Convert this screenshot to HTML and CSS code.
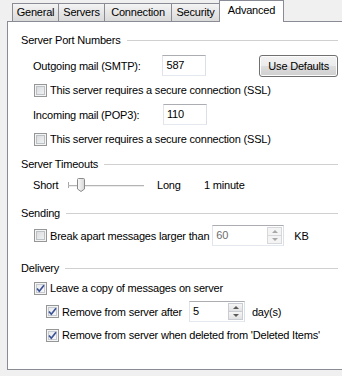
FILE: index.html
```html
<!DOCTYPE html>
<html lang="en">
<head>
  <meta charset="UTF-8">
  <title>Account Properties - Advanced</title>
  <link rel="stylesheet" href="styles.css">
</head>
<body>
  <div class="dialog">
    <div class="tabs">
      <div class="tab tab-general">General</div>
      <div class="tab tab-servers">Servers</div>
      <div class="tab tab-connection">Connection</div>
      <div class="tab tab-security">Security</div>
      <div class="tab tab-advanced active">Advanced</div>
    </div>

    <div class="panel">
      <!-- Ports -->
      <div class="group ports">
        <div class="group-head">Server Port Numbers</div>
        <div class="row tall">
          <span class="field-label">Outgoing mail (SMTP):</span>
          <div class="textbox port">587</div>
          <button class="btn">Use Defaults</button>
        </div>
        <div class="row check-row">
          <span class="check"></span>
          <span class="check-label">This server requires a secure connection (SSL)</span>
        </div>
        <div class="row tall">
          <span class="field-label">Incoming mail (POP3):</span>
          <div class="textbox port">110</div>
        </div>
        <div class="row check-row">
          <span class="check"></span>
          <span class="check-label">This server requires a secure connection (SSL)</span>
        </div>
      </div>

      <!-- Timeouts -->
      <div class="group timeouts">
        <div class="group-head">Server Timeouts</div>
        <div class="row">
          <span class="slider-short">Short</span>
          <svg class="slider" width="80" height="16" viewBox="0 0 80 16">
            <defs>
              <linearGradient id="thumb" x1="0" y1="0" x2="1" y2="0">
                <stop offset="0" stop-color="#fbfbfb"/>
                <stop offset="1" stop-color="#d6d6d6"/>
              </linearGradient>
            </defs>
            <line x1="0.5" y1="5" x2="0.5" y2="11" stroke="#a8a8a8"/>
            <line x1="0" y1="8.5" x2="76" y2="8.5" stroke="#b4b4b4"/>
            <line x1="1" y1="9.5" x2="76" y2="9.5" stroke="#ececec"/>
            <path d="M9.5 2.5 Q9.5 1.5 10.5 1.5 H15.5 Q16.5 1.5 16.5 2.5 V12 L13 14.5 L9.5 12 Z" fill="url(#thumb)" stroke="#8a8a8a"/>
          </svg>
          <span class="slider-long">Long</span>
          <span>1 minute</span>
        </div>
      </div>

      <!-- Sending -->
      <div class="group sending">
        <div class="group-head">Sending</div>
        <div class="row tall check-row">
          <span class="check"></span>
          <span class="check-label">Break apart messages larger than</span>
          <div class="spin spin-kb disabled">
            <span class="spin-value">60</span>
            <span class="spin-btns"><span class="up"></span><span class="down"></span></span>
          </div>
          <span class="unit-kb">KB</span>
        </div>
      </div>

      <!-- Delivery -->
      <div class="group delivery">
        <div class="group-head">Delivery</div>
        <div class="row check-row">
          <span class="check checked"><svg width="11" height="11" viewBox="0 0 11 11"><path d="M2 5.5 L4.3 8.2 L9 2.3" fill="none" stroke="#3c5295" stroke-width="1.7"/></svg></span>
          <span class="check-label">Leave a copy of messages on server</span>
        </div>
        <div class="row tall check-row nested">
          <span class="check checked"><svg width="11" height="11" viewBox="0 0 11 11"><path d="M2 5.5 L4.3 8.2 L9 2.3" fill="none" stroke="#3c5295" stroke-width="1.7"/></svg></span>
          <span class="check-label">Remove from server after</span>
          <div class="spin spin-days">
            <span class="spin-value">5</span>
            <span class="spin-btns"><span class="up"></span><span class="down"></span></span>
          </div>
          <span class="unit-days">day(s)</span>
        </div>
        <div class="row check-row nested">
          <span class="check checked"><svg width="11" height="11" viewBox="0 0 11 11"><path d="M2 5.5 L4.3 8.2 L9 2.3" fill="none" stroke="#3c5295" stroke-width="1.7"/></svg></span>
          <span class="check-label">Remove from server when deleted from 'Deleted Items'</span>
        </div>
      </div>
    </div>
  </div>
</body>
</html>
```

FILE: styles.css
```css
body {
  margin: 0;
  padding: 0;
  width: 342px;
  height: 376px;
  overflow: hidden;
  background-color: #f0f0f0;
  font-family: "Liberation Sans", Arial, sans-serif;
  font-size: 11px;
  letter-spacing: -0.2px;
  color: #000;
}

/* Tabs */
.tabs {
  display: flex;
  align-items: flex-end;
  height: 21px;
  margin-left: 12px;
}
.tab {
  box-sizing: border-box;
  height: 18px;
  margin-right: -1px;
  border: 1px solid #898c95;
  border-bottom: none;
  background: linear-gradient(#f4f4f4, #e6e6e6 50%, #dadada);
  text-align: center;
  line-height: 17px;
}
.tab-general { width: 47px; }
.tab-servers { width: 47px; }
.tab-connection { width: 68px; }
.tab-security { width: 49px; }
.tab-advanced { width: 65px; }
.tab.active {
  position: relative;
  z-index: 1;
  height: 22px;
  margin-bottom: -1px;
  background: #fff;
  line-height: 19px;
}

/* Panel */
.panel {
  box-sizing: border-box;
  width: 339px;
  height: 349px;
  margin-left: 7px;
  padding: 10px 7px 0 13px;
  border: 1px solid #898c95;
  background-color: #fff;
}

.group {
  display: flex;
  flex-direction: column;
}
.ports { gap: 6px; }
.timeouts { gap: 5px; margin-top: 9px; }
.sending { gap: 4px; margin-top: 12px; }
.delivery { gap: 5px; margin-top: 14px; }

.group-head {
  display: flex;
  align-items: center;
  height: 16px;
}
.group-head::after {
  content: "";
  flex: 1;
  height: 1px;
  margin-left: 6px;
  background-color: #d0d0d0;
}
.ports .group-head { margin-bottom: 1px; }
.delivery .group-head { margin-bottom: -1px; }

.row {
  display: flex;
  align-items: center;
  height: 16px;
  padding-left: 12px;
  white-space: nowrap;
}
.row.tall {
  height: 21px;
}
.row.check-row {
  padding-left: 13px;
}
.row.nested {
  padding-left: 25px;
}

.field-label {
  width: 130px;
}

/* Text box */
.textbox {
  box-sizing: border-box;
  height: 21px;
  padding-left: 3px;
  border: 1px solid;
  border-color: #abadb3 #dbdfe6 #e3e9ef #e2e3ea;
  background: #fff;
  line-height: 19px;
}
.port { width: 44px; }

.btn {
  box-sizing: border-box;
  width: 79px;
  height: 22px;
  margin-left: 53px;
  padding: 0;
  border: 1px solid #707070;
  border-radius: 3px;
  background: linear-gradient(#f2f2f2, #ebebeb 50%, #dddddd 51%, #cfcfcf);
  box-shadow: inset 0 0 0 1px #fcfcfc;
  font-family: inherit;
  font-size: 11px;
  letter-spacing: -0.2px;
  color: #000;
}

/* Checkbox */
.check {
  box-sizing: border-box;
  flex: none;
  width: 13px;
  height: 13px;
  border: 1px solid #959696;
  background: linear-gradient(135deg, #d3d6da, #f7f7f7);
  box-shadow: inset 0 0 0 1px #f4f4f4, inset 0 0 0 2px #bcc1c6;
}
.check.checked {
  background: linear-gradient(135deg, #e4e6e9, #fbfbfb);
  box-shadow: inset 0 0 0 1px #f4f4f4, inset 0 0 0 2px #c6cad0;
}
.check svg {
  display: block;
}
.check-label {
  margin-left: 3px;
}

/* Slider */
.slider-short { width: 35px; }
.slider { display: block; }
.slider-long {
  width: 47px;
  margin-left: 9px;
}

/* Spinner */
.spin {
  box-sizing: border-box;
  display: flex;
  height: 21px;
  border: 1px solid;
  border-color: #abadb3 #dbdfe6 #e3e9ef #e2e3ea;
  background: #fff;
}
.spin-value {
  flex: 1;
  padding-left: 3px;
  line-height: 19px;
}
.spin-btns {
  display: flex;
  flex-direction: column;
  width: 15px;
  margin: 1px 1px 1px 0;
}
.spin-btns span {
  position: relative;
  flex: 1;
  border: 1px solid #c9ccd2;
  background: linear-gradient(#f6f6f6, #e2e2e2);
}
.spin-btns .down { border-top: none; }
.spin-btns span::after {
  content: "";
  position: absolute;
  left: 4px;
  border-left: 3px solid transparent;
  border-right: 3px solid transparent;
}
.spin-btns .up::after {
  top: 2px;
  border-bottom: 3px solid #5b5b5b;
}
.spin-btns .down::after {
  top: 2px;
  border-top: 3px solid #5b5b5b;
}
.spin.disabled .spin-value { color: #6d6d6d; }
.spin.disabled .spin-btns span { border-color: #d6d8dc; background: #f4f4f4; }
.spin.disabled .spin-btns .down { border-top: none; }
.spin.disabled .spin-btns .up::after { border-bottom-color: #a8a8a8; }
.spin.disabled .spin-btns .down::after { border-top-color: #a8a8a8; }

.spin-kb {
  width: 72px;
  margin-left: 3px;
}
.unit-kb { margin-left: 10px; }

.spin-days {
  width: 56px;
  margin-left: 7px;
}
.unit-days { margin-left: 7px; }
```
